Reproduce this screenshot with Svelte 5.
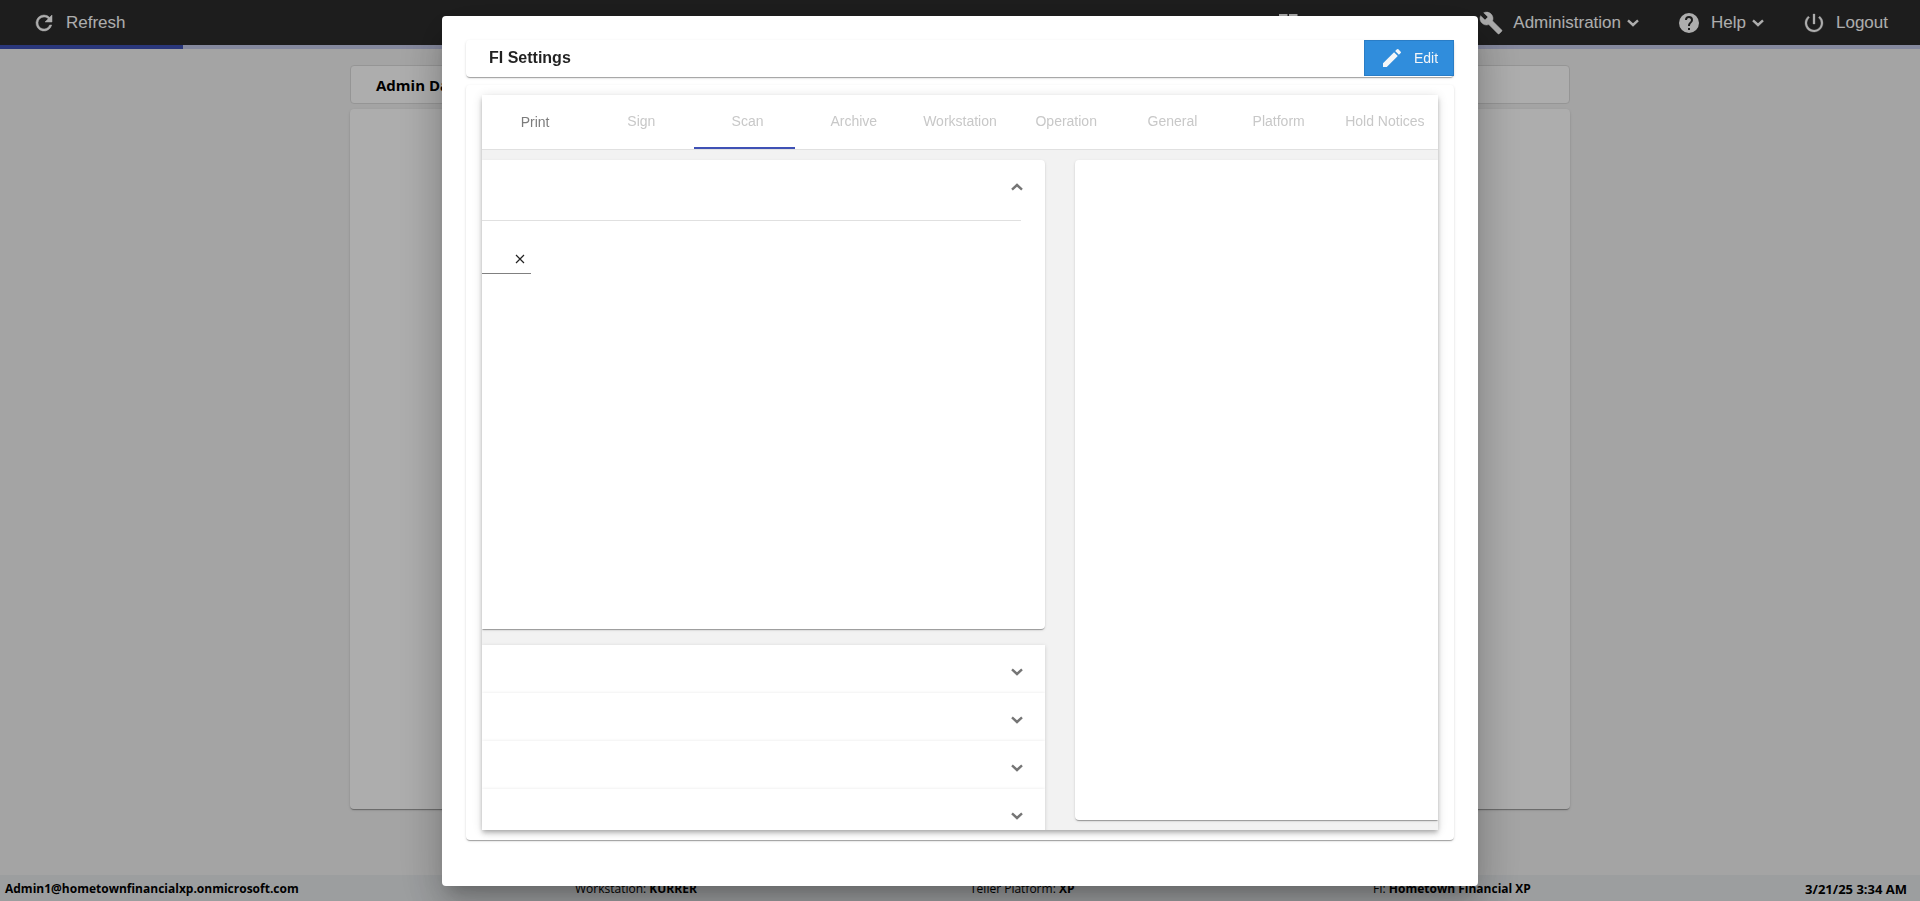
<script>
  /** Settings tabs shown along the top of the dialog */
  const tabs = [
    'Print',
    'Sign',
    'Scan',
    'Archive',
    'Workstation',
    'Operation',
    'General',
    'Platform',
    'Hold Notices',
  ];

  /** Tab the ink bar sits under */
  let activeTab = $state('Scan');

  /** Collapsed sections below the open one */
  const sections = ['Section 2', 'Section 3', 'Section 4', 'Section 5'];

  let fieldValue = $state('');
</script>

{#snippet chevron(up)}
  <svg class="chevron" class:up viewBox="0 0 24 24" aria-hidden="true">
    <path d="m7 9.4 5 4.6 5-4.6" />
  </svg>
{/snippet}

<div class="page">
  <header class="toolbar">
    <button class="tool">
      <svg viewBox="0 0 24 24" aria-hidden="true">
        <path d="M17.65 6.35A7.96 7.96 0 0 0 12 4a8 8 0 1 0 7.73 10h-2.08A6 6 0 1 1 12 6c1.66 0 3.14.69 4.22 1.78L13 11h7V4z" stroke="currentColor" stroke-width=".5" />
      </svg>
      Refresh
    </button>
    <nav class="menu">
      <button class="tool dashboard">
        <svg viewBox="0 0 24 24" aria-hidden="true">
          <path d="M3 3h8.5v8H3zm10 0h8.5v8H13zM3 13h8.5v8H3zm10 0h8.5v8H13z" />
        </svg>
        Dashboard
      </button>
      <button class="tool">
        <svg viewBox="0 0 24 24" aria-hidden="true">
          <path d="m22.7 19-9.1-9.1c.9-2.3.4-5-1.5-6.9-2-2-5-2.4-7.4-1.3L9 6 6 9 1.6 4.7C.4 7.1.9 10.1 2.9 12.1c1.9 1.9 4.6 2.4 6.9 1.5l9.1 9.1c.4.4 1 .4 1.4 0l2.3-2.3c.5-.4.5-1.1.1-1.4z" stroke="currentColor" stroke-width=".5" />
        </svg>
        <span>Administration</span>
        {@render chevron(false)}
      </button>
      <button class="tool">
        <svg viewBox="0 0 24 24" aria-hidden="true">
          <path d="M12 2a10 10 0 1 0 0 20 10 10 0 0 0 0-20zm1 17h-2v-2h2zm2.07-7.75-.9.92C13.45 12.9 13 13.5 13 15h-2v-.5c0-1.1.45-2.1 1.17-2.83l1.24-1.26A2 2 0 1 0 10 9H8a4 4 0 1 1 8 0c0 .88-.36 1.68-.93 2.25z" />
        </svg>
        <span>Help</span>
        {@render chevron(false)}
      </button>
      <button class="tool">
        <svg viewBox="0 0 24 24" aria-hidden="true">
          <path d="M13 3h-2v10h2zm4.83 2.17-1.42 1.42A6.92 6.92 0 0 1 19 12a7 7 0 1 1-11.42-5.42L6.17 5.17A9 9 0 1 0 21 12a8.93 8.93 0 0 0-3.17-6.83z" stroke="currentColor" stroke-width=".3" />
        </svg>
        Logout
      </button>
    </nav>
  </header>
  <div class="progress"><div class="progress-bar"></div></div>

  <main class="main">
    <div class="page-title">Admin Dashboard</div>
    <div class="page-card"></div>
  </main>

  <footer class="status">
    <b>Admin1@hometownfinancialxp.onmicrosoft.com</b>
    <span>Workstation: <b>KURRER</b></span>
    <span>Teller Platform: <b>XP</b></span>
    <span>FI: <b>Hometown Financial XP</b></span>
    <b class="clock">3/21/25 3:34 AM</b>
  </footer>
</div>

<div class="overlay">
  <div class="dialog" role="dialog" aria-labelledby="dialog-title">
    <div class="dialog-header">
      <h2 id="dialog-title">FI Settings</h2>
      <button class="edit">
        <svg viewBox="0 0 24 24" aria-hidden="true">
          <path d="M3 17.25V21h3.75L17.81 9.94l-3.75-3.75zM20.71 7.04a1 1 0 0 0 0-1.41l-2.34-2.34a1 1 0 0 0-1.41 0l-1.83 1.83 3.75 3.75z" />
        </svg>
        Edit
      </button>
    </div>

    <div class="dialog-body">
      <div class="panel">
        <div class="tabs" role="tablist">
          {#each tabs as tab, i}
            <button
              class="tab"
              class:enabled={i === 0}
              class:active={tab === activeTab}
              role="tab"
              aria-selected={tab === activeTab}
              onclick={() => (activeTab = tab)}>{tab}</button>
          {/each}
        </div>

        <div class="content">
          <div class="column">
            <section class="card open-section">
              <button class="section-toggle" aria-label="Collapse section">
                {@render chevron(true)}
              </button>
              <div class="section-body">
                <div class="field">
                  <input type="text" aria-label="Value" bind:value={fieldValue} />
                  <button aria-label="Clear" onclick={() => (fieldValue = '')}>
                    <svg viewBox="0 0 10 10" aria-hidden="true">
                      <path d="m1 1 8 8M9 1 1 9" />
                    </svg>
                  </button>
                </div>
              </div>
            </section>
            <div class="accordion">
              {#each sections as section}
                <button class="row" aria-label={section}>
                  {@render chevron(false)}
                </button>
              {/each}
            </div>
          </div>
          <section class="card preview"></section>
        </div>
      </div>
    </div>
  </div>
</div>

<style>
  :global(body) {
    margin: 0;
    background: #f2f2f2;
    font-family: 'Liberation Sans', Arial, sans-serif;
  }

  button {
    padding: 0;
    border: 0;
    background: none;
    color: inherit;
    font: inherit;
    cursor: pointer;
  }

  svg {
    display: block;
    flex: none;
    width: 24px;
    height: 24px;
    fill: currentColor;
  }

  .chevron {
    fill: none;
    stroke: currentColor;
    stroke-width: 2.4;
  }

  .chevron.up {
    transform: rotate(180deg);
  }

  /* Page behind the dialog */
  .page {
    display: flex;
    flex-direction: column;
    height: 100vh;
    overflow: hidden;
  }

  .toolbar {
    display: flex;
    flex: none;
    justify-content: space-between;
    height: 45px;
    padding: 0 32px;
    background: #2c2c2c;
    color: #fff;
    font-size: 17px;
  }

  .menu {
    display: flex;
    gap: 36px;
  }

  .tool {
    display: flex;
    align-items: center;
    gap: 10px;
    white-space: nowrap;
  }

  .tool .chevron {
    margin: 0 -4px 0 -10px;
  }

  .dashboard {
    width: 167px;
  }

  .progress {
    flex: none;
    height: 4px;
    background: #c5cae9;
  }

  .progress-bar {
    width: 183px;
    height: 100%;
    background: #3f51b5;
  }

  .main {
    display: flex;
    flex: 1;
    flex-direction: column;
    gap: 5px;
    box-sizing: border-box;
    width: 100%;
    max-width: 1220px;
    margin: 0 auto;
    padding: 16px 0 66px;
  }

  .page-title {
    box-sizing: border-box;
    height: 39px;
    padding: 0 25px;
    border: 1px solid #dcdcdc;
    border-radius: 4px;
    background: #fff;
    font: bold 15px/38px 'Open Sans', 'Noto Sans', sans-serif;
  }

  .page-card {
    flex: 1;
    border-radius: 4px;
    background: #fff;
  }

  .page-card,
  .card,
  .dialog-header,
  .dialog-body {
    box-shadow:
      0 2px 1px -1px rgba(0, 0, 0, 0.2),
      0 1px 1px 0 rgba(0, 0, 0, 0.14),
      0 1px 3px 0 rgba(0, 0, 0, 0.12);
  }

  .status {
    display: grid;
    grid-template-columns: 570px 395px 403px 1fr auto;
    flex: none;
    box-sizing: border-box;
    height: 26px;
    padding: 1px 13px 0 5px;
    background: #e6e9eb;
    font: 12px/26px 'Open Sans', 'Noto Sans', sans-serif;
    white-space: nowrap;
  }

  .clock {
    font-size: 13px;
  }

  /* Dialog */
  .overlay {
    position: fixed;
    inset: 0;
    display: flex;
    justify-content: center;
    padding: 16px 0 15px;
    background: rgba(0, 0, 0, 0.32);
  }

  .dialog {
    display: flex;
    flex-direction: column;
    gap: 8px;
    box-sizing: border-box;
    width: 90%;
    max-width: 1036px;
    padding: 24px 24px 46px;
    border-radius: 4px;
    background: #fff;
    color: rgba(0, 0, 0, 0.87);
    box-shadow:
      0 11px 15px -7px rgba(0, 0, 0, 0.2),
      0 24px 38px 3px rgba(0, 0, 0, 0.14),
      0 9px 46px 8px rgba(0, 0, 0, 0.12);
  }

  .dialog-header {
    display: flex;
    flex: none;
    align-items: flex-start;
    justify-content: space-between;
    height: 37px;
    border-radius: 4px;
  }

  h2 {
    margin: 0;
    padding-left: 23px;
    font-size: 16px;
    line-height: 36px;
  }

  .edit {
    display: flex;
    align-items: center;
    justify-content: center;
    gap: 10px;
    box-sizing: border-box;
    width: 90px;
    height: 36px;
    border: 1px solid #2a7dc6;
    background: #308ddc;
    color: #f4f6f8;
    font-size: 14px;
  }

  .dialog-body {
    display: flex;
    flex: 1;
    min-height: 0;
    padding: 10px 16px;
    border-radius: 4px;
  }

  .panel {
    display: flex;
    flex: 1;
    flex-direction: column;
    min-width: 0;
    overflow: hidden;
    background: #f2f2f2;
    box-shadow:
      0 2px 4px -1px rgba(0, 0, 0, 0.2),
      0 4px 5px 0 rgba(0, 0, 0, 0.14),
      0 1px 10px 0 rgba(0, 0, 0, 0.12);
  }

  .tabs {
    display: flex;
    flex: none;
    height: 54px;
    border-bottom: 1px solid #e0e0e0;
    background: #fff;
  }

  .tab {
    position: relative;
    flex: 1 1 0;
    min-width: 0;
    padding-bottom: 2px;
    color: #c8c8c8;
    font-size: 14px;
    white-space: nowrap;
  }

  .tab.enabled {
    padding-bottom: 0;
    color: #7c7c7c;
  }

  .tab.active::after {
    content: '';
    position: absolute;
    right: 6px;
    bottom: 0;
    left: 0;
    height: 2px;
    background: #3f51b5;
  }

  .content {
    display: grid;
    grid-template-columns: 563fr 363fr;
    flex: 1;
    gap: 30px;
    min-height: 0;
    padding: 10px 0;
  }

  .column {
    display: flex;
    flex-direction: column;
    gap: 16px;
    min-height: 0;
  }

  .card {
    background: #fff;
  }

  .open-section {
    flex: none;
    border-radius: 0 4px 4px 0;
  }

  .section-toggle {
    display: flex;
    align-items: center;
    justify-content: flex-end;
    box-sizing: border-box;
    width: 100%;
    height: 60px;
    padding: 0 16px 6px 0;
    color: #757575;
  }

  .section-body {
    box-sizing: border-box;
    min-height: 409px;
    margin-right: 24px;
    padding-top: 24px;
    border-top: 1px solid #e0e0e0;
  }

  .field {
    display: flex;
    align-items: center;
    width: 49px;
    height: 28px;
    border-bottom: 1px solid #808080;
  }

  .field input {
    flex: 1;
    min-width: 0;
    padding: 0;
    border: 0;
    outline: 0;
    background: none;
    font: inherit;
    font-size: 14px;
  }

  .field button {
    padding: 0 6px;
  }

  .field svg {
    width: 10px;
    height: 10px;
    fill: none;
    stroke: #222;
    stroke-width: 1.2;
  }

  .row {
    display: flex;
    align-items: center;
    justify-content: flex-end;
    box-sizing: border-box;
    width: 100%;
    height: 48px;
    padding: 6px 16px 0 0;
    background: #fff;
    color: #757575;
    box-shadow:
      0 3px 1px -2px rgba(0, 0, 0, 0.04),
      0 1px 4px 0 rgba(0, 0, 0, 0.16);
  }

  .preview {
    border-radius: 4px 0 0 4px;
  }
</style>
